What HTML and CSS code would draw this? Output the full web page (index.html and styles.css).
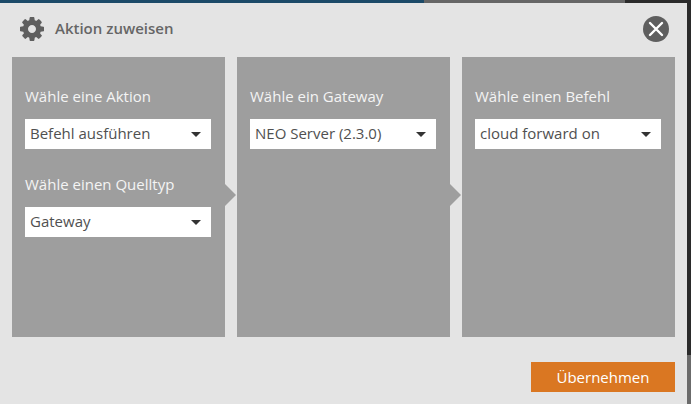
FILE: index.html
```html
<!DOCTYPE html>
<html lang="de">
<head>
<meta charset="UTF-8" />
<meta name="viewport" content="width=device-width, initial-scale=1" />
<title>Aktion zuweisen</title>
<link rel="stylesheet" href="styles.css">
</head>
<body>

<div class="backdrop">
  <div class="modal">
    <div class="modal-header">
      <svg class="gear" viewBox="128 128 1536 1536" width="24" height="24">
        <path fill="#5f5f5f" d="M1152 896q0-106-75-181t-181-75-181 75-75 181 75 181 181 75 181-75 75-181zm512-109v222q0 12-8 23t-20 13l-185 28q-19 54-39 91 35 50 107 138 10 12 10 25t-9 23q-27 37-99 108t-94 71q-12 0-26-9l-138-108q-44 23-91 38-16 136-29 186-7 28-36 28h-222q-14 0-24.500-8.500t-11.500-21.500l-28-184q-49-16-90-37l-141 107q-10 9-25 9-14 0-25-11-126-114-165-168-7-10-7-23 0-12 8-23 15-21 51-66.500t54-70.500q-27-50-41-99l-183-27q-13-2-21-12.500t-8-23.500v-222q0-12 8-23t19-13l186-28q14-46 39-92-40-57-107-138-10-12-10-24 0-10 9-23 26-36 98.500-107.500t94.500-71.500q13 0 26 10l138 107q44-23 91-38 16-136 29-186 7-28 36-28h222q14 0 24.500 8.500t11.500 21.500l28 184q49 16 90 37l142-107q9-9 24-9 13 0 25 10 129 119 165 170 7 8 7 22 0 12-8 23-15 21-51 66.500t-54 70.500q26 50 41 98l183 28q13 2 21 12.500t8 23.500z"/>
      </svg>
      <span class="modal-title">Aktion zuweisen</span>
      <button class="close-btn" aria-label="Schließen">
        <svg viewBox="0 0 26 26" width="26" height="26">
          <circle cx="13" cy="13" r="13" fill="#5f5f5f"/>
          <path d="M7 7l12 12M19 7L7 19" stroke="#fff" stroke-width="2.400" stroke-linecap="round"/>
        </svg>
      </button>
    </div>

    <div class="steps">
      <div class="step">
        <label>Wähle eine Aktion</label>
        <div class="select">Befehl ausführen</div>
        <label>Wähle einen Quelltyp</label>
        <div class="select">Gateway</div>
        <span class="arrow"></span>
      </div>
      <div class="step">
        <label>Wähle ein Gateway</label>
        <div class="select">NEO Server (2.3.0)</div>
        <span class="arrow"></span>
      </div>
      <div class="step">
        <label>Wähle einen Befehl</label>
        <div class="select">cloud forward on</div>
      </div>
    </div>

    <div class="modal-footer">
      <button class="submit-btn">Übernehmen</button>
    </div>
  </div>
</div>

</body>
</html>
```

FILE: styles.css
```css
html, body {
  margin: 0;
  padding: 0;
  height: 404px;
  overflow: hidden;
}
body {
  font-family: "Open Sans", sans-serif;
  background: #2b2b2b;
}
/* page behind the dialog: only a thin strip shows at the top and right */
.backdrop {
  height: 404px;
  padding: 3px 4px 0 0;
  box-sizing: border-box;
  background:
    linear-gradient(to right, #1c4a68 424px, #666 424px, #666 625px, #2b2b2b 625px) top / 100% 3px no-repeat,
    linear-gradient(#2b2b2b 355px, #6b6b6b 355px);
}
.modal {
  height: 401px;
  background: #e4e4e4;
  padding: 0 12px;
  display: flex;
  flex-direction: column;
}
.modal-header {
  height: 51px;
  padding: 0 6px 3px 8px;
  display: flex;
  align-items: center;
}
.gear {
  margin-right: 11px;
}
.modal-title {
  font-size: 15px;
  font-weight: 600;
  line-height: 20px;
  padding-bottom: 2px;
  color: #666;
  flex: 1;
}
.close-btn {
  background: none;
  border: none;
  padding: 0;
  height: 26px;
}
.steps {
  display: flex;
  gap: 12px;
  height: 280px;
}
.step {
  position: relative;
  width: 213px;
  background: #9e9e9e;
  padding: 30px 14px 0 13px;
  box-sizing: border-box;
}
.step label {
  display: block;
  font-size: 15px;
  color: #f4f4f4;
  line-height: 18px;
  margin-bottom: 14px;
}
.select {
  position: relative;
  height: 30px;
  line-height: 28px;
  background: #fff;
  color: #505050;
  font-size: 15px;
  padding-left: 5px;
  margin-bottom: 26px;
}
.select::after {
  content: "";
  position: absolute;
  right: 10px;
  top: 13px;
  border-style: solid;
  border-color: #333 transparent transparent;
  border-width: 5px 5px 0;
}
.arrow {
  position: absolute;
  left: 100%;
  top: 127px;
  border: 11px solid transparent;
  border-left-color: #9e9e9e;
  border-right: 0;
}
.modal-footer {
  display: flex;
  justify-content: flex-end;
  padding-top: 25px;
}
.submit-btn {
  width: 144px;
  height: 30px;
  background: #da7722;
  color: #fff;
  border: none;
  font-family: inherit;
  font-size: 15px;
}
```
